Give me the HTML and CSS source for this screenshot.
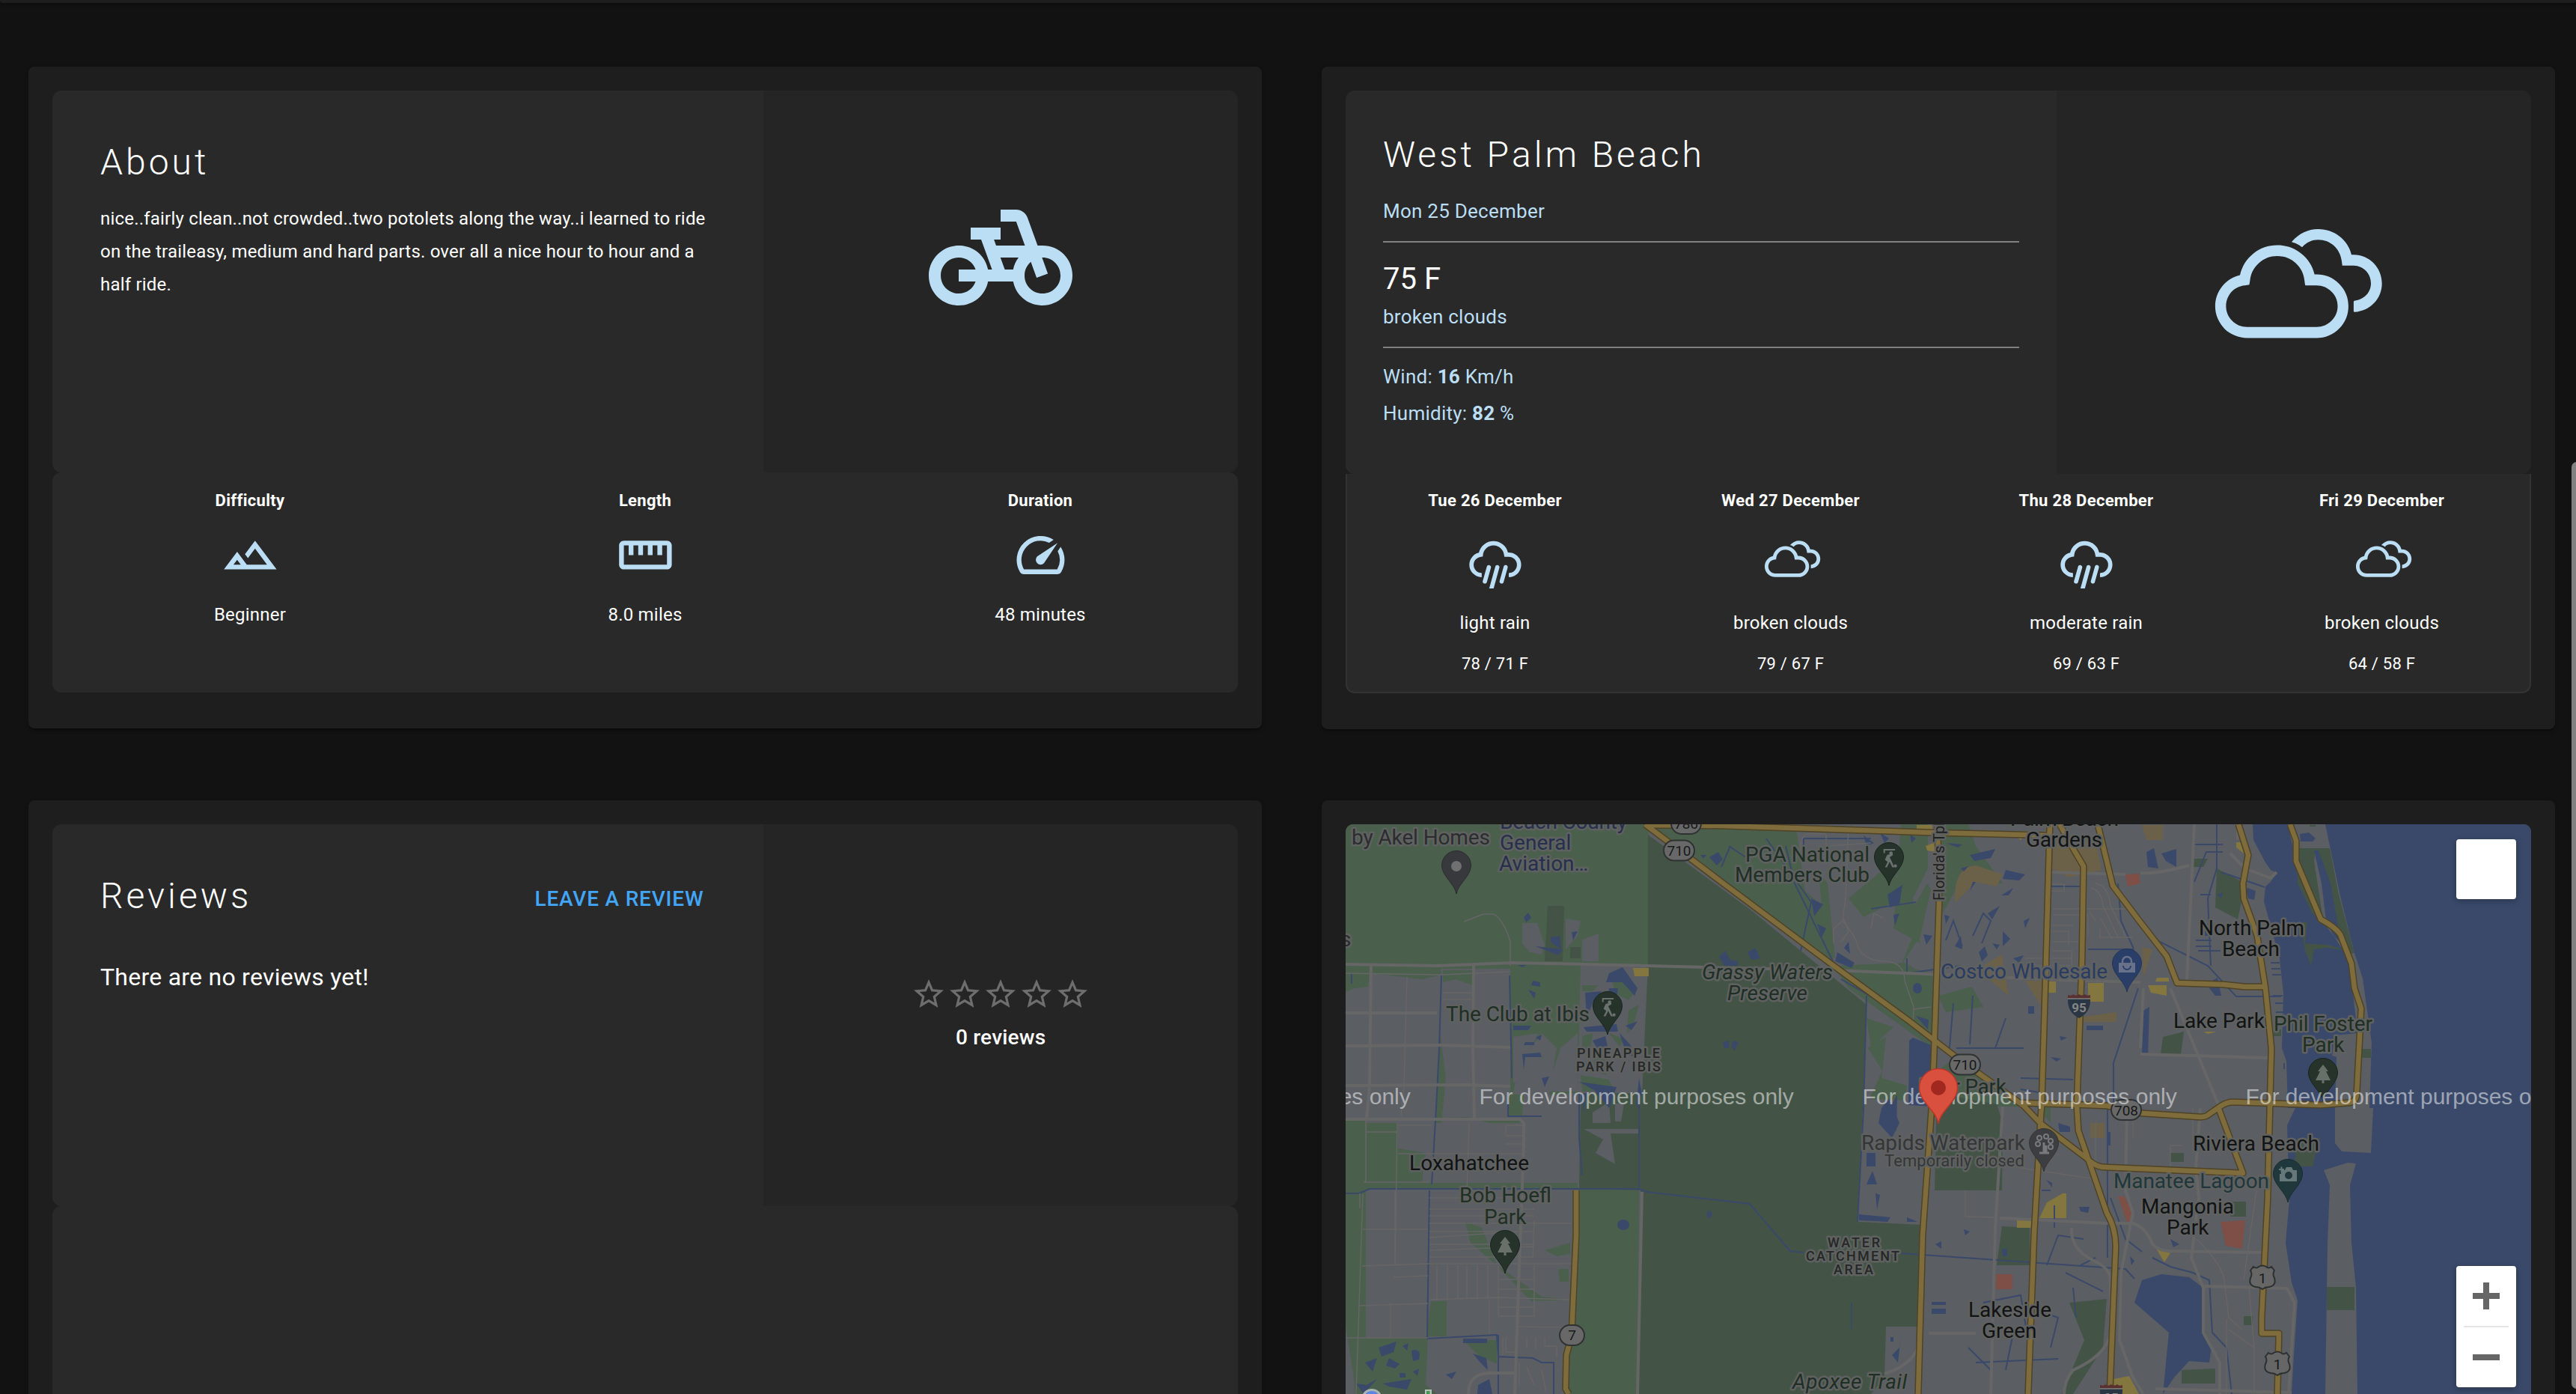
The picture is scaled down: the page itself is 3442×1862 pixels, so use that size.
FILE: index.html
```html
<!DOCTYPE html>
<html lang="en">
<head>
<meta charset="utf-8">
<title>Trail details</title>
<link rel="stylesheet" href="styles.css">
</head>
<body>
<svg class="sprite" aria-hidden="true">
  <symbol id="i-bike" viewBox="0 0 24 24"><path d="M18.18 10l-1.7-4.68C16.19 4.53 15.44 4 14.6 4H12v2h2.6l1.46 4h-4.81l-.36-1H12V7H7v2h1.75l1.82 5H9.9c-.44-2.23-2.31-3.88-4.65-3.99C2.45 9.87 0 12.2 0 15c0 2.8 2.2 5 5 5 2.46 0 4.45-1.69 4.9-4h4.2c.44 2.23 2.31 3.88 4.65 3.99 2.8.13 5.25-2.19 5.25-5 0-2.8-2.2-5-5-5h-.82zM7.82 16c-.4 1.17-1.49 2-2.82 2-1.68 0-3-1.32-3-3s1.32-3 3-3c1.33 0 2.42.83 2.82 2H5v2h2.82zm6.28-2h-1.4l-.73-2H15c-.44.58-.76 1.25-.9 2zm4.9 4c-1.68 0-3-1.32-3-3 0-.93.41-1.73 1.05-2.28l.96 2.64 1.88-.68-.97-2.67c.03 0 .06-.01.08-.01 1.68 0 3 1.32 3 3s-1.32 3-3 3z"/></symbol>
  <symbol id="i-terrain" viewBox="0 0 24 24"><path d="M14 6l-4.22 5.63 1.25 1.67L14 9.33 19 16h-8.46l-4.01-5.37L1 18h22L14 6zM5 16l1.52-2.03L8.04 16H5z"/></symbol>
  <symbol id="i-ruler" viewBox="0 0 24 24"><path d="M21 6H3c-1.1 0-2 .9-2 2v8c0 1.1.9 2 2 2h18c1.1 0 2-.9 2-2V8c0-1.1-.9-2-2-2zm0 10H3V8h2v4h2V8h2v4h2V8h2v4h2V8h2v4h2V8h2v8z"/></symbol>
  <symbol id="i-speed" viewBox="0 0 24 24"><path d="M20.38 8.57l-1.23 1.85a8 8 0 0 1-.22 7.58H5.07A8 8 0 0 1 15.58 6.85l1.85-1.23A10 10 0 0 0 3.35 19a2 2 0 0 0 1.72 1h13.85a2 2 0 0 0 1.74-1 10 10 0 0 0-.27-10.44zm-9.79 6.84a2 2 0 0 0 2.83 0l5.66-8.49-8.49 5.66a2 2 0 0 0 0 2.83z"/></symbol>
  <symbol id="i-star" viewBox="0 0 24 24"><path d="M22 9.24l-7.19-.62L12 2 9.19 8.63 2 9.24l5.46 4.73L5.82 21 12 17.27 18.18 21l-1.63-7.03L22 9.24zM12 15.4l-3.76 2.27 1-4.28-3.32-2.88 4.38-.38L12 6.1l1.71 4.04 4.38.38-3.32 2.88 1 4.28L12 15.4z"/></symbol>
  <symbol id="i-clouds" viewBox="2.4 2.4 24 24"><path d="M3.89 17.6c0-.99.31-1.88.93-2.65s1.41-1.27 2.38-1.49c.26-1.17.85-2.14 1.78-2.88.93-.75 2-1.12 3.22-1.12 1.18 0 2.24.36 3.16 1.09.93.73 1.53 1.66 1.8 2.8h.27c1.18 0 2.18.41 3.01 1.24s1.25 1.83 1.25 3c0 1.18-.42 2.18-1.25 3.01s-1.83 1.25-3.01 1.25H8.16c-.58 0-1.13-.11-1.65-.34S5.52 21 5.14 20.62c-.38-.38-.68-.84-.91-1.36s-.34-1.09-.34-1.66zm1.45 0c0 .76.28 1.42.82 1.96s1.21.82 1.99.82h9.28c.77 0 1.44-.27 1.99-.82.55-.55.83-1.2.83-1.96s-.27-1.42-.83-1.96c-.55-.54-1.21-.82-1.99-.82h-1.39c-.1 0-.15-.05-.15-.15l-.07-.49c-.1-.94-.5-1.73-1.19-2.35s-1.51-.93-2.45-.93-1.76.31-2.46.94c-.7.62-1.09 1.41-1.18 2.34l-.07.42c0 .1-.05.15-.16.15l-.45.07c-.72.06-1.32.36-1.81.89-.46.53-.71 1.16-.71 1.89z"/><path d="M14.15 8.95C15.1 7.9 16.3 7.31 17.65 7.31c2.15 0 4 1.44 4.45 3.41h.28c2.12 0 3.79 1.73 3.79 3.83 0 2.05-1.57 3.7-3.67 3.83q-.11 0-.11-.13V17q0-.1.11-.12c1.3-.18 2.2-1.13 2.2-2.33 0-1.3-1-2.35-2.3-2.37h-1.53l-.07-.58c-.2-1.7-1.5-2.88-3.15-2.88-.8 0-1.55.33-2.1.95q-.07.06-.17-.02-.4-.38-1.15-.58-.16-.04-.08-.12z"/></symbol>
  <symbol id="i-rain" viewBox="3.05 2.4 24 24"><path d="M4.64 16.91c0-1.15.36-2.17 1.08-3.07.72-.9 1.63-1.47 2.73-1.73.31-1.37 1.02-2.49 2.11-3.37s2.35-1.32 3.76-1.32c1.38 0 2.61.43 3.69 1.28s1.78 1.95 2.1 3.29h.33c.9 0 1.73.22 2.49.65s1.37 1.03 1.81 1.79c.44.76.67 1.58.67 2.48 0 .88-.21 1.7-.63 2.45s-1 1.35-1.73 1.8c-.73.45-1.54.69-2.41.72-.13 0-.2-.06-.2-.17v-1.33c0-.12.07-.18.2-.18.85-.04 1.58-.38 2.18-1.02s.9-1.39.9-2.26-.33-1.62-.98-2.26-1.42-.96-2.31-.96h-1.61c-.12 0-.18-.06-.18-.17l-.08-.58c-.11-1.08-.58-1.99-1.39-2.71-.82-.73-1.76-1.09-2.85-1.09s-2.05.36-2.85 1.09c-.81.73-1.26 1.63-1.36 2.71l-.07.53c0 .12-.07.19-.2.19l-.53.03c-.83.1-1.53.46-2.1 1.07s-.85 1.33-.85 2.16c0 .87.3 1.62.9 2.26s1.33.98 2.18 1.02c.11 0 .17.06.17.18v1.33c0 .11-.06.17-.17.17-1.34-.06-2.47-.57-3.4-1.53s-1.4-2.11-1.4-3.45z"/><path d="M9.99 23.6c0-.04.01-.11.04-.2l1.63-5.77c.06-.19.17-.34.32-.44.15-.1.31-.15.46-.15.07 0 .15.01.24.03.24.04.42.17.54.37.12.2.15.42.08.67l-1.63 5.73c-.12.43-.4.64-.82.64-.6-.1-.86-.4-.86-.88zM12.61 26.41l2.44-8.77c.04-.19.14-.34.3-.44.16-.1.32-.15.49-.15.09 0 .18.01.27.03.22.06.38.19.49.39.11.2.13.41.07.64l-2.43 8.78c-.14.43-.4.61-.8.61-.6-.04-.94-.4-.83-1.09zM16.74 23.62c0-.04.01-.11.04-.23l1.63-5.77c.06-.19.16-.34.3-.44.15-.1.3-.15.46-.15.08 0 .17.01.26.03.21.06.36.16.46.31.1.15.15.31.15.47l-.04.26-1.63 5.73c-.14.43-.4.63-.79.63-.6-.1-.84-.4-.84-.84z"/></symbol>
  <symbol id="p-drop" viewBox="-21 -21 42 60" overflow="visible"><path d="M0 38C-2 25-19.500 14-19.500 0A19.500 19.500 0 0 1 19.500 0C19.500 14 2 25 0 38Z"/></symbol>
  <symbol id="p-golf" viewBox="-20 -20 40 40" overflow="visible"><path d="M-7-6V-11H9" fill="none" stroke="#6b716c" stroke-width="2.200"/><path d="M5-6L-3-3 -6 4 -2 7 -6 15H-3L1 7 5 15H8L3 4 1 0 6-3Z" fill="#6b716c"/><circle cx="3" cy="-6" r="2.600" fill="#6b716c"/><circle cx="9.500" cy="13" r="2.400" fill="#6b716c"/></symbol>
  <symbol id="p-tree" viewBox="-20 -20 40 40" overflow="visible"><path d="M0-12L7-3H4L10 9H1.500V13H-1.500V9H-10L-4-3H-7Z" fill="#687069"/></symbol>
  <symbol id="p-us" viewBox="-20 -20 40 40" overflow="visible"><path d="M-12-14Q-8-11-5-14Q0-17 5-14Q8-11 12-14L16-9Q13-4 16 1Q19 11 9 13Q4 13 0 16Q-4 13-9 13Q-19 11-16 1Q-13-4-16-9Z" fill="#666" stroke="#2d3030" stroke-width="2"/></symbol>
  <symbol id="p-95" viewBox="-20 -20 40 40" overflow="visible"><path d="M-15-9H15Q16 9 0 17Q-16 9-15-9Z" fill="#2b3645"/><path d="M-15-10V-14Q-10-12-8-15Q-4-12 0-15Q4-12 8-15Q10-12 15-14V-10Z" fill="#5b3030"/><path d="M-15-9H15" stroke="#777" stroke-width="1.500"/></symbol>
</svg>

<div class="topbar"></div>

<main class="board">
  <section class="panel">
    <div class="hero">
      <div class="hero-main">
        <h2 class="title">About</h2>
        <p class="description">nice..fairly clean..not crowded..two potolets along the way..i learned to ride on the traileasy, medium and hard parts. over all a nice hour to hour and a half ride.</p>
      </div>
      <div class="hero-side"><svg class="icon-bike"><use href="#i-bike"/></svg></div>
    </div>
    <div class="facts">
      <div class="fact"><h3 class="label">Difficulty</h3><svg class="icon-fact"><use href="#i-terrain"/></svg><p class="value">Beginner</p></div>
      <div class="fact"><h3 class="label">Length</h3><svg class="icon-fact"><use href="#i-ruler"/></svg><p class="value">8.0 miles</p></div>
      <div class="fact"><h3 class="label">Duration</h3><svg class="icon-fact"><use href="#i-speed"/></svg><p class="value">48 minutes</p></div>
    </div>
  </section>

  <section class="panel">
    <div class="hero hero-weather">
      <div class="hero-main">
        <h2 class="title">West Palm Beach</h2>
        <p class="sub date">Mon 25 December</p>
        <hr class="rule">
        <p class="temp">75 F</p>
        <p class="sub">broken clouds</p>
        <hr class="rule">
        <p class="metric">Wind: <b>16</b> Km/h</p>
        <p class="metric">Humidity: <b>82</b> %</p>
      </div>
      <div class="hero-side"><svg class="icon-sky"><use href="#i-clouds"/></svg></div>
    </div>
    <div class="forecast">
      <div class="day"><h3 class="label">Tue 26 December</h3><svg class="icon-day"><use href="#i-rain"/></svg><p class="value">light rain</p><p class="range">78 / 71 F</p></div>
      <div class="day"><h3 class="label">Wed 27 December</h3><svg class="icon-day"><use href="#i-clouds"/></svg><p class="value">broken clouds</p><p class="range">79 / 67 F</p></div>
      <div class="day"><h3 class="label">Thu 28 December</h3><svg class="icon-day"><use href="#i-rain"/></svg><p class="value">moderate rain</p><p class="range">69 / 63 F</p></div>
      <div class="day"><h3 class="label">Fri 29 December</h3><svg class="icon-day"><use href="#i-clouds"/></svg><p class="value">broken clouds</p><p class="range">64 / 58 F</p></div>
    </div>
  </section>

  <section class="panel panel-tall">
    <div class="hero">
      <div class="hero-main">
        <div class="reviews-head"><h2 class="title">Reviews</h2><button class="review-button" type="button">LEAVE A REVIEW</button></div>
        <p class="empty">There are no reviews yet!</p>
      </div>
      <div class="hero-side rating">
        <div class="stars"><svg class="star"><use href="#i-star"/></svg><svg class="star"><use href="#i-star"/></svg><svg class="star"><use href="#i-star"/></svg><svg class="star"><use href="#i-star"/></svg><svg class="star"><use href="#i-star"/></svg></div>
        <p class="count">0 reviews</p>
      </div>
    </div>
    <div class="review-list"></div>
  </section>

  <section class="panel panel-tall">
    <div class="map">
      <svg class="map-canvas" viewBox="1798 1101 1584 761">
        <!-- land cover -->
        <g class="park">
          <path d="M1798 1101H2203V1294H1798Z"/>
          <path d="M2198 1101L2400 1106 2412 1190 2440 1215 2450 1290 2203 1110Z"/>
          <path d="M2018 1292H2112V1410L2108 1460 2070 1462 2080 1400 2060 1380 2030 1420 2018 1480Z"/>
          <path d="M1798 1290H1924L1926 1302 1900 1308 1830 1300 1828 1318 1810 1320 1798 1325ZM1928 1296H1968V1316L1945 1308 1928 1312ZM1924 1380L1932 1440 1926 1500H1919ZM1798 1495H1825V1862H1812L1798 1770ZM1826 1500H1868V1534L1905 1540 1900 1580H1826ZM2016 1462H2036L2034 1490H2014ZM1870 1495H2034L2030 1500 1990 1500 1960 1492Z"/>
          <path d="M1798 1580H2108V1589H1798ZM1958 1632L1980 1640 2000 1690 2060 1732 2098 1736 2046 1738 2000 1690 1965 1660ZM2064 1670L2098 1660V1675L2080 1678ZM2082 1695H2096V1712H2084ZM1912 1738H1933V1785L1906 1785ZM1808 1788L1908 1786 1905 1850 1920 1862H1810ZM1955 1790H2000V1822L1975 1810Z"/>
          <path d="M2110 1588H2190L2188 1862H2092L2098 1788Z"/>
          <path d="M2540 1101H2576V1160L2556 1200 2566 1260 2530 1240ZM2470 1200L2530 1150 2540 1200 2490 1225ZM2430 1165L2442 1180 2452 1280 2440 1276ZM2594 1101H2630L2640 1130 2676 1180 2620 1175 2596 1220ZM2450 1290L2546 1286 2560 1295 2582 1300V1400L2470 1320ZM2590 1330L2635 1318 2650 1345 2600 1352Z"/>
          <path d="M2494 1360L2530 1372 2500 1400ZM2496 1400L2520 1385 2514 1440 2548 1450 2545 1470 2498 1468 2515 1430ZM2540 1290L2560 1240 2546 1230 2575 1180 2580 1188 2566 1250Z"/>
          <path d="M2589 1430L2610 1415 2700 1475 2720 1478H2588ZM2720 1478H2740V1500Z"/>
        </g>
        <g class="preserve">
          <path d="M2202 1115L2340 1216 2494 1342 2489 1480 2482 1632 2567 1636 2561 1772 2520 1772 2518 1840 2500 1862H2188L2192 1590 2110 1588 2112 1460H2194L2202 1290Z"/>
          <path d="M2068 1210H2090L2088 1284H2064ZM2098 1265H2112V1280H2098Z"/>
          <path d="M2588 1460L2668 1475 2676 1500 2675 1590H2585ZM2675 1638L2712 1640V1690H2668ZM2962 1160L3000 1180 2990 1228 2960 1212ZM2930 1147H2950L2944 1158H2930ZM2890 1385L2918 1378 2914 1408H2887Z"/>
          <path d="M2900 1540H2918V1552H2900ZM2980 1605H3001V1625H2980ZM2915 1830L2960 1828V1848H2915ZM2765 1740L2815 1735 2810 1800 2770 1862H2755L2785 1790ZM2998 1758H3010V1770H2998Z"/>
        </g>
        <g class="housing">
          <path d="M2034 1233H2054L2064 1262 2060 1275 2044 1272 2034 1260ZM2092 1227L2112 1230 2108 1250 2092 1268ZM2114 1255L2136 1247V1284H2114Z"/>
          <path d="M2112 1290H2200L2194 1460H2108Z"/>
          <path d="M2022 1385L2056 1380 2045 1400 2036 1432 2060 1430 2040 1445 2022 1446ZM2085 1400L2108 1380V1458H2066Z"/>
          <path d="M2128 1486L2150 1472 2152 1500H2128ZM2158 1474L2170 1474 2166 1498H2158ZM2116 1508H2190V1514H2152L2158 1555 2132 1540 2142 1522Z"/>
        </g>
        <g class="park"><path d="M2114 1316H2136L2128 1324H2114ZM2154 1312L2168 1308 2184 1326 2176 1336 2160 1328ZM2114 1384L2128 1380 2124 1410 2114 1400ZM2150 1380L2170 1388 2164 1398ZM2176 1350L2190 1342 2182 1372 2174 1380ZM2130 1404L2150 1410 2146 1436 2130 1430ZM2112 1436L2150 1442 2156 1456 2114 1458Z"/></g>
        <g class="shops">
          <path d="M2612 1205Q2610 1158 2640 1156L2676 1168 2668 1184 2640 1178 2620 1198ZM2744 1122H2800L2808 1162 2764 1172 2742 1160ZM2650 1290L2675 1275 2684 1330 2660 1310ZM2706 1310H2728V1345ZM2784 1358L2828 1352V1365H2784ZM2862 1102H2890V1122H2868ZM2862 1265L2876 1268 2864 1305ZM2793 1500H2812V1520H2793Z"/>
        </g>
        <g class="commerce">
          <path d="M2561 1102H2582V1110H2561ZM2573 1130L2588 1124V1138L2575 1136ZM2684 1110H2710L2700 1122ZM2737 1311H2747V1326H2735ZM2790 1313H2811V1338H2790ZM2870 1316H2895V1330L2874 1326ZM2882 1306H2898V1311H2880ZM2988 1125H2998V1140L2988 1132ZM2182 1293H2203V1304H2184ZM2756 1594H2761V1627H2725L2735 1606ZM2695 1630H2715V1640H2695ZM2880 1666L2900 1674 2892 1686ZM2824 1842L2845 1838 2858 1862H2824ZM2944 1378H2962L2950 1381Z"/>
        </g>
        <g class="hospital"><path d="M2840 1168L2858 1167 2860 1180 2843 1184ZM2830 1598H2838L2848 1615V1632H2842ZM2967 1632L3000 1630 2996 1668 2974 1664ZM2667 1702H2689V1722H2667Z"/></g>

        <!-- water -->
        <g class="water">
          <path d="M3010 1101L3011 1122 3027 1152 3034 1162 3042 1166 3034 1178 3027 1184 3025 1204 3046 1280 3051 1327 3049 1400 3055 1417 3057 1480 3067 1480 3056 1503 3059 1603 3054 1660 3062 1713 3070 1737 3065 1810 3062 1862H3382V1101Z"/>
          <path d="M2888 1702L2925 1706 2944 1720 2942 1770 2955 1800 2952 1820 2925 1818 2905 1840 2890 1862 2898 1780 2852 1740 2862 1710Z"/>
          <path d="M2551 1390L2556 1386 2580 1396 2582 1478 2550 1476ZM2455 1272L2478 1286 2474 1293 2452 1284ZM2560 1357L2577 1362 2576 1375ZM2522 1195L2542 1182 2538 1208 2525 1212ZM2534 1148L2538 1142 2534 1170ZM2525 1480L2535 1462 2534 1510 2522 1512Z"/>
          <path d="M2150 1300L2168 1292 2188 1320 2184 1330 2168 1312 2146 1312ZM2118 1326L2140 1324 2128 1340 2120 1360ZM2150 1320H2162L2158 1346 2148 1336ZM2116 1372L2160 1368 2162 1378 2120 1378ZM2172 1370L2188 1364 2180 1376ZM2128 1390L2145 1384 2148 1398 2134 1400ZM2164 1380L2178 1395 2188 1415 2172 1405ZM2110 1445L2160 1452 2150 1480 2130 1456ZM2190 1440L2194 1460 2186 1480ZM2112 1462L2120 1460 2116 1486Z"/>
          <path d="M2036 1225L2042 1219 2046 1226 2039 1232ZM2072 1252L2084 1250 2086 1268 2072 1258ZM2100 1245L2108 1244 2102 1256ZM2052 1264L2088 1268 2082 1276ZM2048 1310L2058 1312V1318L2046 1316ZM2042 1322L2052 1326 2050 1334ZM2022 1370H2046L2042 1376H2022ZM2052 1386L2060 1382 2058 1390ZM2038 1392L2050 1392V1396H2036ZM2034 1408L2058 1406 2060 1412 2038 1412 2036 1428ZM2060 1440L2070 1438 2064 1452ZM2028 1289H2040L2034 1292Z"/>
          <path d="M2297 1278L2305 1270 2312 1282 2322 1284V1290H2304ZM2335 1272L2345 1266 2352 1280 2340 1282ZM2302 1392L2310 1390V1400L2304 1400ZM2316 1390L2323 1392 2318 1403 2313 1398ZM2284 1145L2296 1138 2302 1148 2294 1156ZM2272 1142L2280 1142 2276 1147Z"/>
          <ellipse cx="2562" cy="1320" rx="6" ry="7"/><ellipse cx="2169" cy="1636" rx="8" ry="7"/><ellipse cx="2284" cy="1622" rx="3.500" ry="4.500"/>
          <path d="M1842 1800L1866 1792 1862 1806 1846 1812ZM1824 1820L1840 1814 1834 1832ZM1856 1814L1870 1822 1864 1828 1852 1824ZM1886 1804Q1900 1800 1896 1816L1888 1818ZM1874 1798L1882 1794 1880 1804ZM1888 1832L1896 1828 1894 1838ZM1848 1848L1886 1842 1880 1856 1856 1852ZM1870 1834H1878V1840H1870ZM1812 1848L1826 1850 1840 1842 1822 1862ZM1955 1788H1987V1794H1955ZM1932 1836L1946 1832 1940 1842ZM1975 1850L1990 1842 1994 1862H1974ZM1968 1808L1986 1814 1988 1830 1978 1820Z"/>
          <path d="M2514 1480L2524 1468 2538 1500 2528 1520 2510 1500ZM2494 1540H2506V1558H2494ZM2502 1564L2508 1582H2494ZM2506 1594L2512 1596 2508 1616ZM2484 1622L2526 1626 2522 1632 2484 1630ZM2548 1626L2562 1632H2548ZM2526 1786H2530V1792H2526ZM2540 1784L2536 1820 2528 1810 2538 1800Z"/>
          <path d="M2581 1739H2600V1743H2581ZM2581 1748H2600V1755H2581ZM2586 1662L2594 1658V1668ZM2750 1500L2766 1505V1512H2752ZM2624 1642L2632 1645 2626 1650ZM2675 1668H2682V1678H2676ZM2778 1612L2792 1612 2790 1620 2780 1618ZM2846 1678L2852 1684 2848 1690ZM2734 1576L2742 1580V1586ZM2816 1512H2820V1530H2816ZM2900 1655L2912 1662 2904 1666Z"/>
          <path d="M2788 1370H2810V1376H2788ZM2710 1344H2718V1354H2710ZM2752 1384L2762 1386 2754 1390ZM2740 1412L2754 1414 2748 1418ZM2600 1126L2622 1128 2616 1132ZM2632 1142L2666 1134 2660 1146 2638 1150ZM2620 1160L2630 1157 2624 1164ZM2680 1162L2706 1168 2698 1176 2676 1174ZM2636 1178H2640L2632 1190ZM2674 1196L2690 1186 2684 1196ZM2656 1220L2672 1210 2662 1228ZM2612 1264L2620 1250 2622 1268ZM2644 1272L2652 1264 2656 1276 2648 1284ZM2676 1244L2686 1254 2676 1264ZM2704 1230L2712 1226 2706 1240ZM2690 1280L2704 1276 2698 1286ZM2662 1260L2672 1262 2668 1268Z"/>
          <path d="M2412 1140L2436 1132 2426 1144ZM2490 1116L2504 1126 2494 1130ZM2512 1112L2524 1120 2518 1126ZM2552 1114L2560 1120 2554 1126ZM2420 1200L2436 1208 2424 1224ZM2428 1234L2440 1240 2434 1252ZM2464 1266L2470 1258 2472 1274ZM2530 1222L2538 1220 2532 1236ZM2570 1248L2582 1250 2574 1262ZM2598 1222L2605 1224 2600 1234Z"/>
          <path d="M2868 1138L2878 1133 2884 1160 2870 1158ZM2888 1140L2908 1134V1158L2894 1150ZM3000 1185L3014 1190 3012 1202 3004 1200ZM2956 1310L2963 1306 2968 1330 2960 1330 2952 1320ZM2962 1195L2970 1192 2968 1200ZM2946 1234H2956V1250H2946ZM2864 1350L2872 1345 2870 1410H2862Z"/>
        </g>
        <g class="canals">
          <path d="M1926 1302L1923 1400 1919 1480 1913 1582M1806 1301V1314M2017 1303L2020 1440M1910 1590L1907 1788 2000 1783 2002 1812 2048 1814 2060 1820H2076V1862M2002 1783V1862M1798 1594H1816L1830 1588H2190L2200 1592 2338 1608 2392 1671 2410 1673M2110 1460V1520L2114 1570M2190 1470V1586M2015 1460V1491H2060M2540 1674L2840 1695 2852 1708M2474 1740V1775"/>
          <path d="M2494 1330L2490 1480 2482 1632M2386 1130L2398 1180 2452 1290M2360 1120L2420 1205 2406 1270M2310 1130L2340 1150M2312 1130L2300 1158M2410 1120H2500M2410 1120V1140M2530 1300H2582M2460 1308L2550 1360M2548 1280V1300L2620 1290M2500 1214L2560 1205M2600 1256L2610 1230 2622 1264M2636 1250L2650 1220 2660 1230 2648 1260M2614 1400H2704M2610 1340L2604 1410M2636 1330L2632 1395M2680 1360L2666 1400M2740 1184H2780M2790 1268H2850M2830 1180L2834 1230 2850 1265 2856 1300M2857 1320L2824 1420V1478M2816 1465V1680M2700 1440L2770 1442M2700 1455L2730 1460M2962 1101V1160L2950 1200 2954 1290M2870 1250L2950 1290 2988 1331H3048M2932 1128H2970M2932 1178L2948 1138H2970M2940 1195H2954M2934 1256H2955M2934 1264H2955M2937 1270H2967M3034 1286H3046M3035 1294H3047M3036 1302H3048M3037 1330H3050M3040 1340H3051M3041 1352H3053M3052 1420V1428M3100 1411H3147V1392M2968 1165L3026 1185"/>
          <path d="M2735 1690L2750 1650 2784 1655M2745 1640V1610M2728 1590L2740 1590M2800 1680L2780 1690M2770 1720L2774 1760M2650 1740L2700 1730 2710 1790M2640 1820L2750 1815M2760 1700L2810 1725M2630 1800L2660 1830M2720 1750L2750 1760 2740 1800M2690 1780L2680 1830M2820 1600L2840 1655 2862 1672M2876 1680L2900 1692 2930 1700 2952 1710 2956 1780 2975 1800 2982 1862"/>
        </g>
        <!-- barrier islands -->
        <g class="island">
          <path d="M3057 1101H3107L3127 1197 3146 1273 3157 1307 3169 1393 3166 1480 3171 1480 3168 1540 3129 1538 3120 1527V1480L3122 1412 3116 1410 3120 1383 3150 1380 3144 1327 3138 1280 3120 1253 3098 1223 3072 1180 3064 1133Z"/>
          <path d="M3137 1553L3148 1554 3140 1583 3142 1660 3148 1720 3150 1862H3107L3110 1660 3113 1583 3105 1563Z"/>
        </g>
        <g class="preserve">
          <path d="M3068 1133H3113L3125 1195 3146 1273 3140 1274 3120 1228 3094 1136 3092 1150 3104 1228 3110 1240 3090 1220 3070 1180ZM3086 1102H3094V1104H3086ZM3074 1232H3083L3080 1260 3110 1262 3138 1270 3110 1266 3092 1268 3088 1290 3080 1270ZM3154 1401H3168V1413H3154ZM3038 1375H3048V1384H3038ZM3109 1719H3146V1750H3109ZM3070 1520H3100L3090 1558H3065Z"/>
        </g>
        <g class="water"><path d="M3092 1136H3098L3114 1180 3128 1260 3118 1250 3108 1230 3102 1180ZM3073 1114L3085 1112 3094 1120 3090 1124H3074Z"/></g>

        <!-- local streets -->
        <g class="streets wide">
          <path d="M1798 1288L1920 1290 2020 1286 2120 1288 2280 1292 2450 1296 2600 1302 2780 1310 2860 1312"/>
          <path d="M1832 1290L1830 1450 1826 1495M1969 1290L1968 1400 1970 1495M1798 1353H1920M1798 1397L1924 1396 2018 1399M1798 1450L1960 1449 2018 1451M1798 1495H2031L2036 1500V1530L2030 1690 2024 1862M1962 1862Q1962 1836 1988 1834H2024M2194 1592L2188 1862M2676 1478L2666 1640 2660 1862M2672 1627L2815 1634H2850Q2868 1640 2876 1662 2884 1671 2900 1671L3022 1673M2768 1640Q2766 1670 2800 1685 2820 1695 2820 1710V1780Q2815 1810 2770 1830 2758 1845 2758 1862M2842 1478L2840 1590 2850 1620 2834 1700 2832 1790 2850 1840 2864 1862M2940 1480L2934 1560 2938 1600 2928 1680 2944 1720V1780L2966 1820V1862M2945 1718L3056 1721 3066 1740 3058 1862M2860 1166Q2880 1168 2925 1156M2932 1101L2922 1310M2741 1165L2840 1168M2860 1408L3030 1413M2900 1320L2966 1480M2864 1320L2860 1400M2990 1101V1122M2980 1140L3000 1160 3034 1173 3042 1165M2577 1781H2640M2880 1855L3062 1860M2518 1835Q2566 1820 2566 1780"/>
        </g>
        <g class="streets thin">
          <path d="M2018 1290V1258Q2010 1230 1996 1221H1982L1956 1231M1880 1305L1876 1450 1872 1490M1798 1300L1926 1302 2016 1298M1928 1326H1968M1928 1335H1968M1825 1495V1580M1867 1500L1864 1690M1963 1500L1960 1590M1826 1512H1866M1868 1503H1912M1868 1541H2034M2012 1503V1515M2012 1503H2035M2012 1517H2034M2012 1528H2034M1822 1579H1910M1821 1595L1812 1862M1821 1642H1908M1864 1690V1590M1820 1691L1908 1688H2100M1862 1706L1908 1704M1816 1744L1908 1741M1910 1600H2050M1910 1615H2050M1910 1624H2050M1910 1634H2100M1910 1645H2050M1910 1653L2030 1645M1910 1662H2050M1910 1670L2050 1665M1910 1679H2050M1920 1690V1735M1934 1690V1735M1948 1690V1735M1960 1690V1735M1974 1690V1735M1988 1690V1735M2002 1690V1757M1910 1736L2000 1733 2100 1736M2002 1709H2050M2002 1722H2050M2002 1746H2050M2002 1758H2050V1690M1858 1786V1740M1990 1782V1736M2026 1772L2090 1773M2008 1786V1810M2012 1786V1806H2024M2040 1786V1800M2052 1786V1802M2064 1786V1798H2080V1812M2030 1820V1850M2040 1826L2050 1850M2060 1830L2066 1860M1798 1787H1908M2050 1630L2048 1680M1817 1594V1614"/>
          <path d="M2406 1140Q2404 1112 2420 1114H2440V1130L2500 1126M2470 1101L2466 1200 2462 1230Q2480 1250 2484 1268 2494 1284 2520 1284 2545 1286 2545 1310L2557 1345 2556 1370M2557 1348L2580 1345M2450 1260V1240L2464 1228 2470 1244 2460 1258M2500 1240L2504 1220 2516 1226M2741 1181H2758V1192M2741 1190H2756M2742 1214H2850M2744 1222H2790V1250M2742 1236H2770M2742 1244H2764V1262M2742 1258H2780M2742 1270H2768V1290M2742 1280H2770M2742 1290H2766M2800 1180Q2818 1184 2820 1210L2840 1250M2794 1186Q2808 1190 2810 1210L2830 1252M2806 1226L2822 1254M2806 1240V1252H2850M2792 1218L2800 1230M2706 1280H2740M2706 1290H2740M2800 1500V1560M2850 1480V1520M2700 1560L2800 1575M2930 1480V1540M2915 1530H2900V1580M2626 1590V1625L2668 1626M3015 1590L2998 1710M2935 1655Q2970 1690 2972 1710L2978 1760 2996 1776M2975 1762V1862M2978 1776L3012 1800V1862M3005 1720L3012 1800"/>
        </g>

        <!-- highways -->
        <g class="road-edge">
          <path id="hw" d="M2198 1101L2300 1178 2446 1287 2550 1363 2611 1410 2704 1477 2726 1500 2788 1547Q2800 1559 2812 1559L2997 1567 2965 1482M2203 1102L2300 1103 2578 1112 2703 1115 2739 1116M2739 1101L2738 1135 2734 1280 2728 1477 2727 1490 2718 1647 2710 1862M2803 1101L2823 1183 2860 1232 2895 1277 2909 1313 2971 1315 2999 1318H3026M2991 1101L3004 1142 2997 1180 2998 1200 3016 1250 3027 1320 3035 1400 3033 1477 3030 1600 3022 1760V1781H3045L3043 1862M2697 1473L2815 1477 2863 1487 2940 1492Q2948 1492 2952 1488L2968 1477Q2976 1472 2984 1472L3101 1476 3138 1473Q3149 1472 3149 1460L3155 1347 3146 1320 3142 1287 3127 1248Q3120 1238 3101 1228L3068 1150V1123L3060 1101M2106 1590L2106 1650 2100 1783 2093 1810 2092 1855 2096 1862"/>
          <path id="hw2" d="M2589 1101L2591 1205 2584 1413 2581 1480 2569 1650 2563 1862M2752 1101L2771 1135 2784 1157 2782 1280 2775 1477 2777 1510 2815 1620Q2827 1640 2827 1665L2819 1862"/>
        </g>
        <g class="road-fill"><use href="#hw"/><use href="#hw2"/></g>

        <!-- route shields -->
        <g class="shields">
          <rect x="2233" y="1086" width="40" height="28" rx="14"/><rect x="2223" y="1122.500" width="41" height="27" rx="13.500"/><rect x="2605" y="1408.500" width="41" height="27" rx="13.500"/><rect x="2821" y="1469" width="40" height="27" rx="13.500"/><rect x="2084" y="1770" width="33" height="27" rx="13.500"/>
          <text x="2253" y="1107">786</text><text x="2243.500" y="1143">710</text><text x="2625.500" y="1429">710</text><text x="2841" y="1489.500">708</text><text x="2100.500" y="1790">7</text>
        </g>
        <use href="#p-95" x="2758" y="1323" width="40" height="40"/><text class="interstate" x="2778" y="1352">95</text>
        <use href="#p-95" x="2801" y="1844" width="40" height="40"/><text class="interstate" x="2821" y="1873">95</text>
        <use href="#p-us" x="3003" y="1686" width="40" height="40"/><use href="#p-us" x="3023" y="1801" width="40" height="40"/>
        <g class="us-number"><text x="3023" y="1714">1</text><text x="3043" y="1829">1</text></g>

        <!-- place names -->
        <g class="names">
          <text class="t-gray" x="1806" y="1128" textLength="185">by Akel Homes</text>
          <text class="t-navy" x="2004" y="1107" textLength="170">Beach County</text><text class="t-navy" x="2004" y="1135">General</text><text class="t-navy" x="2003" y="1163">Aviation…</text>
          <text class="t-gray" x="1791" y="1263.500">s</text>
          <text class="t-green" x="1932" y="1364" textLength="192">The Club at Ibis</text>
          <text class="t-green" x="2332" y="1151" textLength="166">PGA National</text><text class="t-green" x="2318" y="1178" textLength="180">Members Club</text>
          <text class="t-green t-it" x="2274" y="1308" textLength="175">Grassy Waters</text><text class="t-green t-it" x="2308" y="1336" textLength="107">Preserve</text>
          <text class="t-city" x="2686" y="1103" textLength="145">Palm Beach</text><text class="t-city" x="2707" y="1131" textLength="102">Gardens</text>
          <text class="t-blue" x="2593" y="1307" textLength="223">Costco Wholesale</text>
          <text class="t-green" x="2564" y="1461" textLength="117">Dyer Park</text>
          <text class="t-city" x="2938" y="1249" textLength="141">North Palm</text><text class="t-city" x="2969" y="1277" textLength="77">Beach</text>
          <text class="t-city" x="2904" y="1373" textLength="122">Lake Park</text>
          <text class="t-green" x="3038" y="1376.500" textLength="132">Phil Foster</text><text class="t-green" x="3076" y="1404.500">Park</text>
          <text class="t-city" x="1883" y="1562.500" textLength="160">Loxahatchee</text>
          <text class="t-green" x="1950" y="1606" textLength="123">Bob Hoefl</text><text class="t-green" x="1983" y="1634.500">Park</text>
          <text class="t-green t-it" x="2395" y="1855" textLength="153">Apoxee Trail</text>
          <text class="t-gray2" x="2487" y="1536" textLength="219">Rapids Waterpark</text><text class="t-gray2 t-small" x="2518" y="1558" textLength="187">Temporarily closed</text>
          <text class="t-city" x="2930" y="1536.500" textLength="169">Riviera Beach</text>
          <text class="t-teal" x="2824" y="1586.500" textLength="208">Manatee Lagoon</text>
          <text class="t-city" x="2861" y="1621" textLength="124">Mangonia</text><text class="t-city" x="2895" y="1649">Park</text>
          <text class="t-city" x="2630" y="1758.500" textLength="111">Lakeside</text><text class="t-city" x="2648" y="1786.500">Green</text>
          <text class="t-area" x="2107" y="1413" textLength="111">PINEAPPLE</text><text class="t-area" x="2106" y="1431" textLength="113">PARK / IBIS</text>
          <text class="t-area" x="2442" y="1666" textLength="70">WATER</text><text class="t-area" x="2413" y="1684" textLength="125">CATCHMENT</text><text class="t-area" x="2450" y="1702" textLength="53">AREA</text>
          <text class="t-road" transform="translate(2598 1203) rotate(-90)" x="0" y="0">Florida's Tpke</text>
        </g>

        <!-- place pins -->
        <g class="pins">
          <use class="pin-gray" href="#p-drop" x="1925" y="1135" width="42" height="60"/><circle cx="1946" cy="1157" r="7" fill="#707070"/>
          <use class="pin-green" href="#p-drop" x="2127" y="1323" width="42" height="60"/><use href="#p-golf" x="2130" y="1326" width="36" height="36"/>
          <use class="pin-green" href="#p-drop" x="2503" y="1124" width="42" height="60"/><use href="#p-golf" x="2506" y="1127" width="36" height="36"/>
          <use class="pin-blue" href="#p-drop" x="2821" y="1266" width="42" height="60"/><path d="M2831 1286H2853V1299H2831Z" fill="#67718a"/><path d="M2836 1287V1284A6 6 0 0 1 2848 1284V1287" fill="none" stroke="#67718a" stroke-width="2.500"/><path d="M2837 1290A5 5 0 0 0 2847 1290" fill="none" stroke="#2a3f68" stroke-width="2"/>
          <use class="pin-green" href="#p-drop" x="3083" y="1412" width="42" height="60"/><use href="#p-tree" x="3084" y="1414" width="40" height="40"/>
          <use class="pin-green" href="#p-drop" x="1990" y="1642" width="42" height="60"/><use href="#p-tree" x="1991" y="1644" width="40" height="40"/>
          <use class="pin-gray2" href="#p-drop" x="2710" y="1506" width="42" height="60"/><g fill="none" stroke="#77797b" stroke-width="2"><circle cx="2723" cy="1528" r="3"/><circle cx="2725" cy="1520" r="3"/><circle cx="2734" cy="1518" r="3"/><circle cx="2740" cy="1524" r="3"/><circle cx="2740" cy="1532" r="3"/><path d="M2725 1540H2738M2731 1540V1526M2734 1540V1530" stroke-width="3"/></g>
          <use class="pin-teal" href="#p-drop" x="3036" y="1547" width="42" height="60"/><path d="M3048 1563H3053L3055 1559H3062L3064 1563H3069V1578H3046V1568H3048Z" fill="#67787b"/><circle cx="3058" cy="1570" r="5" fill="#20383c"/><path d="M3045 1562H3052M3048.500 1558.500V1565.500" stroke="#67787b" stroke-width="2"/>
        </g>

        <!-- watermark -->
        <g class="watermark"><text x="1464.500" y="1475">For development purposes only</text><text x="1976.500" y="1475">For development purposes only</text><text x="2488.500" y="1475">For development purposes only</text><text x="3000.500" y="1475">For development purposes only</text></g>

        <path d="M2590 1501C2588 1484 2564.500 1472 2564.500 1453A25.500 25.500 0 0 1 2615.500 1453C2615.500 1472 2592 1484 2590 1501Z" fill="#d9503f" stroke="#b5372b" stroke-width="1.500"/><circle cx="2590" cy="1453" r="10" fill="#a1281e"/>
        <circle cx="1833" cy="1869" r="12.500" fill="#5d87de" stroke="#a9b3b0" stroke-width="3"/><rect x="1904" y="1856" width="9" height="10" fill="#b4bfb5"/><rect x="1906" y="1858" width="4.500" height="10" fill="#3f9b55"/>
      </svg>
      <button class="fullscreen" type="button" aria-label="Toggle fullscreen view"></button>
      <div class="zoom">
        <button class="zoom-button" type="button" aria-label="Zoom in"><svg class="zoom-icon" viewBox="0 0 36 36"><path d="M14 0H22V14H36V22H22V36H14V22H0V14H14Z"/></svg></button>
        <button class="zoom-button" type="button" aria-label="Zoom out"><svg class="zoom-icon" viewBox="0 0 36 36"><path d="M0 14H36V22H0Z"/></svg></button>
      </div>
    </div>
  </section>
</main>
<div class="scroll-thumb"></div>
</body>
</html>
```
FILE: styles.css
```css
* { box-sizing: border-box; }
body {
  margin: 0;
  width: 3442px;
  height: 1862px;
  overflow: hidden;
  position: relative;
  background: #121212;
  color: #fff;
  font-family: Roboto, sans-serif;
}
h2, h3, p { margin: 0; }
button { border: 0; background: none; font-family: inherit; display: block; }
.sprite { position: absolute; width: 0; height: 0; }

.topbar {
  height: 4px;
  background: #1e1e1e;
  border-radius: 0 0 8px 8px;
  box-shadow: 0 4px 2px -2px rgba(0,0,0,.2), 0 2px 2px rgba(0,0,0,.14), 0 2px 6px rgba(0,0,0,.12);
}
.board {
  display: grid;
  grid-template-columns: 1648px 1648px;
  column-gap: 80px;
  row-gap: 95px;
  align-items: start;
  padding: 85px 0 0 38px;
}
.panel {
  padding: 32px 32px 48px;
  border-radius: 8px;
  background: #1e1e1e;
  box-shadow: 0 4px 2px -2px rgba(0,0,0,.2), 0 2px 2px rgba(0,0,0,.14), 0 2px 6px rgba(0,0,0,.12);
}
.panel-tall { height: 885px; }

.hero { display: grid; grid-template-columns: 60% 40%; height: 510px; border-radius: 12px; overflow: hidden; }
.hero-weather { height: 512px; }
.hero-main { padding: 68px 64px 0; background: #292929; }
.hero-weather .hero-main { padding: 58px 50px 0; }
.hero-side { display: flex; align-items: center; justify-content: center; background: #252525; }

.title { font-size: 48px; line-height: 56px; font-weight: 300; letter-spacing: 4px; }
.description { margin-top: 25px; font-size: 24px; line-height: 44px; letter-spacing: .2px; }

.icon-bike, .icon-fact, .icon-sky, .icon-day { display: block; fill: #bbdef4; }
.icon-bike { width: 192px; height: 192px; margin-top: -64px; }
.icon-fact { width: 76.8px; height: 76.8px; margin: 18px auto 19px; }
.icon-sky { width: 240px; height: 240px; }
.icon-day { width: 80px; height: 80px; margin: 21px auto 24px; }

.facts { display: grid; grid-template-columns: repeat(3, 1fr); height: 294px; padding-top: 22px; border-radius: 12px; background: #292929; text-align: center; }
.forecast { display: grid; grid-template-columns: repeat(4, 1fr); height: 293px; padding-top: 20px; border: 2px solid #333; border-top: 0; border-radius: 0 0 12px 12px; background: #292929; text-align: center; }
.label { font-size: 22px; line-height: 32px; font-weight: 700; letter-spacing: .3px; }
.value { font-size: 24px; line-height: 44px; letter-spacing: .22px; }
.range { margin-top: 11px; font-size: 22px; line-height: 44px; letter-spacing: .24px; }

.sub, .metric { font-size: 26px; line-height: 40px; letter-spacing: .25px; color: #bbdef4; }
.date { margin-top: 27px; }
.rule { height: 2px; margin: 20px 0; border: 0; background: #808080; }
.temp { margin: 21px 0 2px; font-size: 40px; line-height: 56px; }
.metric { line-height: 49px; }
.rule:last-of-type { margin-bottom: 14px; }

.reviews-head { display: flex; justify-content: space-between; height: 56px; }
.review-button { margin: 7px 0 0; padding: 0 16px; color: #42a5f5; font-size: 28px; font-weight: 500; line-height: 49px; letter-spacing: .8px; }
.empty { margin-top: 56px; font-size: 32px; line-height: 48px; letter-spacing: .25px; }
.rating { flex-direction: column; gap: 12px; }
.stars { display: flex; }
.star { width: 48px; height: 48px; fill: #6e6e6e; }
.count { font-size: 28px; font-weight: 500; line-height: 44px; letter-spacing: .2px; }
.review-list { height: 295px; border-radius: 12px; background: #292929; }

.map { position: relative; height: 761px; border-radius: 10px 10px 0 0; overflow: hidden; background: #5b5e63; }
.map-canvas { display: block; width: 1584px; height: 761px; }
.park { fill: #4b5f4d; }
.preserve { fill: #435446; }
.housing, .island { fill: #5b5e63; }
.shops { fill: #6b6149; }
.commerce { fill: #83763f; }
.hospital { fill: #7d4f47; }
.water { fill: #3a496a; }
.canals { fill: none; stroke: #3a496a; stroke-width: 2; }
.streets { fill: none; stroke: #676666; stroke-linejoin: round; }
.wide { stroke-width: 4; }
.thin { stroke-width: 1.4; }
.road-edge { fill: none; stroke: #4e4326; stroke-width: 9.5; stroke-linejoin: round; }
.road-fill { fill: none; stroke: #7f6c3c; stroke-width: 6.5; stroke-linejoin: round; }
.shields rect { fill: #686868; stroke: #2f3232; stroke-width: 2; }
.shields text, .us-number text { font-size: 19px; text-anchor: middle; fill: #17191a; }
.interstate { font-size: 17px; font-weight: 700; text-anchor: middle; fill: #858585; }
.names text { font-size: 28px; paint-order: stroke; stroke: #5f6160; stroke-width: 5px; stroke-linejoin: round; }
.names .t-green { fill: #202f25; }
.names .t-gray { fill: #2b2d2e; }
.names .t-gray2 { fill: #343638; }
.names .t-navy { fill: #262f4c; }
.names .t-blue { fill: #2a3b60; }
.names .t-teal { fill: #1f373c; }
.names .t-city { fill: #121314; }
.names .t-it { font-style: italic; }
.names .t-small { font-size: 22px; }
.names .t-area { font-size: 18px; font-weight: 500; fill: #252827; }
.names .t-road { font-size: 20px; fill: #1f2020; }
.pin-gray { fill: #38393c; stroke: #2b2d2f; }
.pin-gray2 { fill: #3c3e41; stroke: #333538; }
.pin-green { fill: #26332a; stroke: #18241b; }
.pin-blue { fill: #2a3f68; stroke: #243555; }
.pin-teal { fill: #20383c; stroke: #182b2f; }
.watermark text { font-family: "Liberation Sans", Arial, sans-serif; font-size: 30px; fill: rgba(255,255,255,.52); }

.fullscreen { position: absolute; top: 20px; right: 20px; width: 80px; height: 80px; border-radius: 4px; background: #fff; box-shadow: 0 2px 8px rgba(0,0,0,.3); }
.zoom { position: absolute; top: 590px; right: 20px; width: 80px; height: 162px; border-radius: 4px; background: #fff; box-shadow: 0 2px 8px rgba(0,0,0,.3); }
.zoom-button { display: flex; align-items: center; justify-content: center; width: 60px; height: 80px; margin: 0 auto; padding: 0; }
.zoom-button + .zoom-button { height: 82px; border-top: 2px solid #e6e6e6; }
.zoom-icon { width: 36px; height: 36px; fill: #666; }

.scroll-thumb { position: absolute; top: 617px; right: -8px; width: 14px; height: 1238px; border-radius: 7px; background: #818181; }
```
